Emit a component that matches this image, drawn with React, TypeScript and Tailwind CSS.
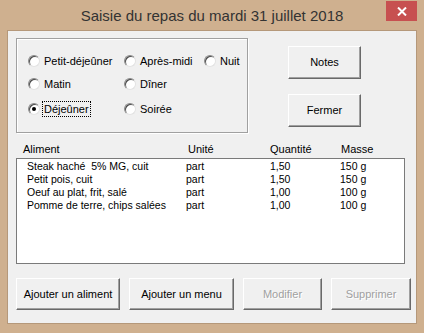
import React from "react";

const font = { fontFamily: '"Liberation Sans", Arial, sans-serif' };

type Meal = { label: string; checked?: boolean; focused?: boolean };

const rows: Meal[][] = [
  [{ label: "Petit-déjeûner" }, { label: "Après-midi" }, { label: "Nuit" }],
  [{ label: "Matin" }, { label: "Dîner" }],
  [{ label: "Déjeûner", checked: true, focused: true }, { label: "Soirée" }],
];

const foods = [
  ["Steak haché  5% MG, cuit", "part", "1,50", "150 g"],
  ["Petit pois, cuit", "part", "1,50", "150 g"],
  ["Oeuf au plat, frit, salé", "part", "1,00", "100 g"],
  ["Pomme de terre, chips salées", "part", "1,00", "100 g"],
];

function Radio({ label, checked, focused }: Meal) {
  return (
    <div className="flex items-center h-[16px]">
      <div className="relative w-[12px] h-[12px] rounded-full bg-white border border-t-[#8a8a8a] border-l-[#8a8a8a] border-r-[#e2e2e2] border-b-[#e2e2e2] shadow-[inset_1px_1px_0_#4a4a4a]">
        {checked && (
          <div className="absolute left-[3px] top-[3px] w-[4px] h-[4px] rounded-full bg-black" />
        )}
      </div>
      <span
        className={`ml-[2px] px-[1px] leading-[14px] text-[11px] text-[#000] whitespace-nowrap border border-dotted ${
          focused ? "border-black" : "border-transparent"
        }`}
      >
        {label}
      </span>
    </div>
  );
}

function Button({
  children,
  className,
  disabled,
}: {
  children: React.ReactNode;
  className: string;
  disabled?: boolean;
}) {
  return (
    <div
      className={`flex items-center justify-center bg-[#f0f0f0] border border-t-white border-l-white border-r-[#696969] border-b-[#696969] shadow-[inset_-1px_-1px_0_#a0a0a0] text-[11px] ${
        disabled ? "text-[#a0a0a0] [text-shadow:1px_1px_0_#fff]" : "text-black"
      } ${className}`}
    >
      {children}
    </div>
  );
}

export default function App() {
  return (
    <div className="w-[424px] h-[333px] bg-[#cfb08f] flex flex-col" style={font}>
      <div className="relative h-[30px] flex items-center justify-center">
        <span className="text-[15px] text-[#333333] leading-none">
          Saisie du repas du mardi 31 juillet 2018
        </span>
        <div className="absolute right-[7px] top-[1px] w-[31px] h-[20px] bg-[#c75050] flex items-center justify-center">
          <svg width="10" height="9" viewBox="0 0 10 9">
            <path d="M1 0.5 L9 8.5 M9 0.5 L1 8.5" stroke="#fff" strokeWidth="2" />
          </svg>
        </div>
      </div>

      <div className="ml-[7px] w-[410px] h-[294px] border border-[#b5987a] bg-[#f0f0f0] pl-[8px] pt-[7px]">
        <div className="flex h-[95px]">
          <div className="w-[232px] h-[95px] border border-[#a0a0a0] shadow-[1px_1px_0_#fff,inset_1px_1px_0_#fff] pl-[11px] pt-[14px]">
            {rows.map((row, i) => (
              <div
                key={i}
                className={`grid grid-cols-[96px_80px_1fr] ${i === 1 ? "mt-[7px]" : i === 2 ? "mt-[9px]" : ""}`}
              >
                {row.map((m) => (
                  <Radio key={m.label} {...m} />
                ))}
              </div>
            ))}
          </div>
          <div className="ml-[40px] mt-[8px] flex flex-col gap-[15px]">
            <Button className="w-[73px] h-[33px]">Notes</Button>
            <Button className="w-[73px] h-[33px]">Fermer</Button>
          </div>
        </div>

        <div className="mt-[10px] h-[13px] flex text-[11px] leading-[13px] text-black">
          <span className="w-[172px] pl-[7px]">Aliment</span>
          <span className="w-[82px]">Unité</span>
          <span className="w-[71px]">Quantité</span>
          <span>Masse</span>
        </div>

        <div className="mt-[2px] w-[389px] h-[106px] bg-white border border-[#7a7a7a] pt-[1px]">
          {foods.map((f) => (
            <div key={f[0]} className="flex h-[13px] text-[10.5px] leading-[13px] text-black">
              <span className="w-[169px] pl-[10px] whitespace-pre">{f[0]}</span>
              <span className="w-[84px]">{f[1]}</span>
              <span className="w-[70px]">{f[2]}</span>
              <span>{f[3]}</span>
            </div>
          ))}
        </div>

        <div className="mt-[14px] flex gap-[9px]">
          <Button className="w-[104px] h-[32px]">Ajouter un aliment</Button>
          <Button className="w-[105px] h-[32px]">Ajouter un menu</Button>
          <Button className="w-[79px] h-[32px]" disabled>
            Modifier
          </Button>
          <Button className="w-[80px] h-[32px]" disabled>
            Supprimer
          </Button>
        </div>
      </div>
    </div>
  );
}
